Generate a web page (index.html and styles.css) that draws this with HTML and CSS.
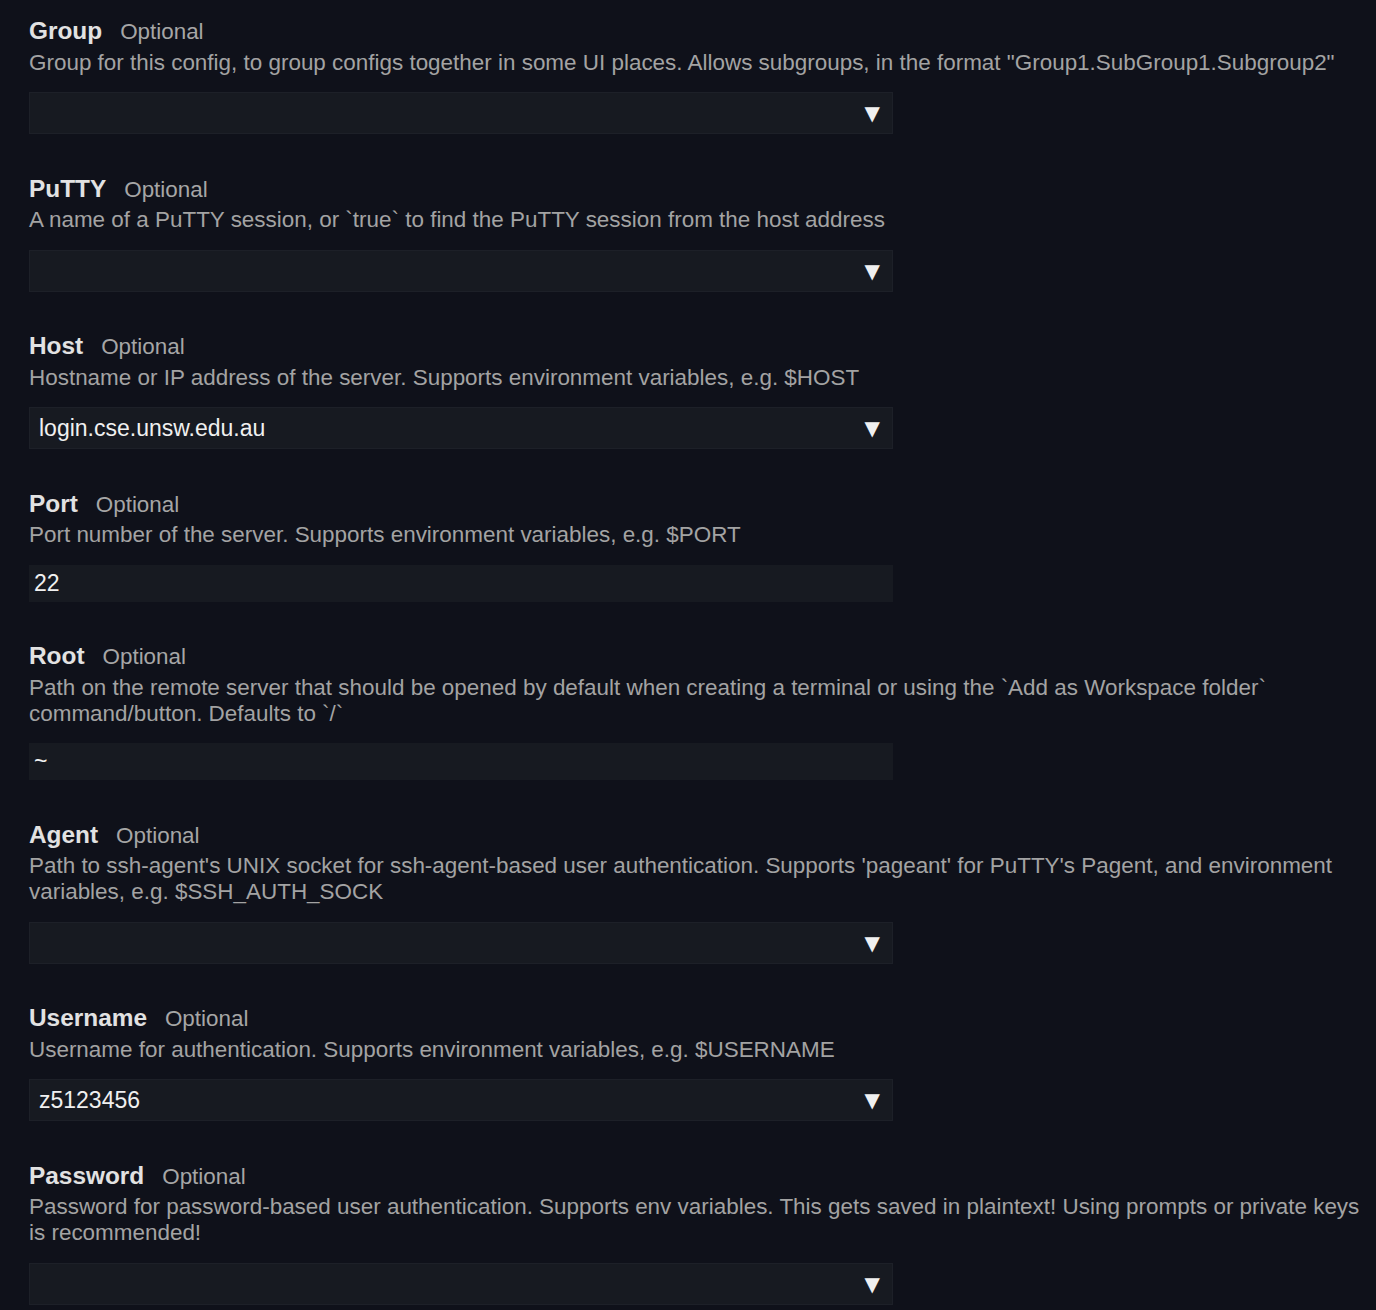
FILE: index.html
```html
<!DOCTYPE html>
<html>
<head>
<meta charset="utf-8">
<link rel="stylesheet" href="styles.css">
</head>
<body>
<div class="form">
  <div class="field">
    <div class="head"><span class="title">Group</span><span class="opt">Optional</span></div>
    <div class="desc">Group for this config, to group configs together in some UI places. Allows subgroups, in the format "Group1.SubGroup1.Subgroup2"</div>
    <div class="combo"><span class="value"></span><span class="arrow">▼</span></div>
  </div>
  <div class="field">
    <div class="head"><span class="title">PuTTY</span><span class="opt">Optional</span></div>
    <div class="desc">A name of a PuTTY session, or `true` to find the PuTTY session from the host address</div>
    <div class="combo"><span class="value"></span><span class="arrow">▼</span></div>
  </div>
  <div class="field">
    <div class="head"><span class="title">Host</span><span class="opt">Optional</span></div>
    <div class="desc">Hostname or IP address of the server. Supports environment variables, e.g. $HOST</div>
    <div class="combo"><span class="value">login.cse.unsw.edu.au</span><span class="arrow">▼</span></div>
  </div>
  <div class="field">
    <div class="head"><span class="title">Port</span><span class="opt">Optional</span></div>
    <div class="desc">Port number of the server. Supports environment variables, e.g. $PORT</div>
    <div class="text">22</div>
  </div>
  <div class="field">
    <div class="head"><span class="title">Root</span><span class="opt">Optional</span></div>
    <div class="desc">Path on the remote server that should be opened by default when creating a terminal or using the `Add as Workspace folder` command/button. Defaults to `/`</div>
    <div class="text">~</div>
  </div>
  <div class="field">
    <div class="head"><span class="title">Agent</span><span class="opt">Optional</span></div>
    <div class="desc">Path to ssh-agent's UNIX socket for ssh-agent-based user authentication. Supports 'pageant' for PuTTY's Pagent, and environment variables, e.g. $SSH_AUTH_SOCK</div>
    <div class="combo"><span class="value"></span><span class="arrow">▼</span></div>
  </div>
  <div class="field">
    <div class="head"><span class="title">Username</span><span class="opt">Optional</span></div>
    <div class="desc">Username for authentication. Supports environment variables, e.g. $USERNAME</div>
    <div class="combo"><span class="value">z5123456</span><span class="arrow">▼</span></div>
  </div>
  <div class="field">
    <div class="head"><span class="title">Password</span><span class="opt">Optional</span></div>
    <div class="desc">Password for password-based user authentication. Supports env variables. This gets saved in plaintext! Using prompts or private keys is recommended!</div>
    <div class="combo"><span class="value"></span><span class="arrow">▼</span></div>
  </div>
</div>
</body>
</html>
```

FILE: styles.css
```css
html, body {
  margin: 0;
  padding: 0;
  background: #0f111a;
}
body {
  font-family: "Liberation Sans", Arial, sans-serif;
  color: #a6a6a6;
}
.form {
  display: flex;
  flex-direction: column;
  gap: 40.7px;
  padding: 17px 12px 0 29px;
}
.field {
  display: flex;
  flex-direction: column;
}
.head {
  display: flex;
  align-items: baseline;
  height: 28px;
  line-height: 28px;
}
.title {
  font-size: 24.4px;
  font-weight: bold;
  color: #e2e2e2;
}
.opt {
  font-size: 22.4px;
  color: #a6a6a6;
  margin-left: 18px;
}
.desc {
  font-size: 22.45px;
  line-height: 25.9px;
  margin-top: 4.5px;
  color: #a3a3a3;
}
.combo {
  margin-top: 16.5px;
  width: 864px;
  height: 42px;
  box-sizing: border-box;
  background: #171a21;
  border: 1px solid #1d2028;
  display: flex;
  align-items: center;
  justify-content: space-between;
  padding: 0 12px 0 9px;
  font-size: 23px;
  color: #f0f0f0;
}
.arrow {
  font-family: "DejaVu Sans", sans-serif;
  font-size: 20px;
  color: #f0f0f0;
}
.text {
  margin-top: 16.5px;
  width: 864px;
  height: 37px;
  box-sizing: border-box;
  background: #171a21;
  display: flex;
  align-items: center;
  padding: 0 5px;
  font-size: 23px;
  color: #f0f0f0;
}
```
